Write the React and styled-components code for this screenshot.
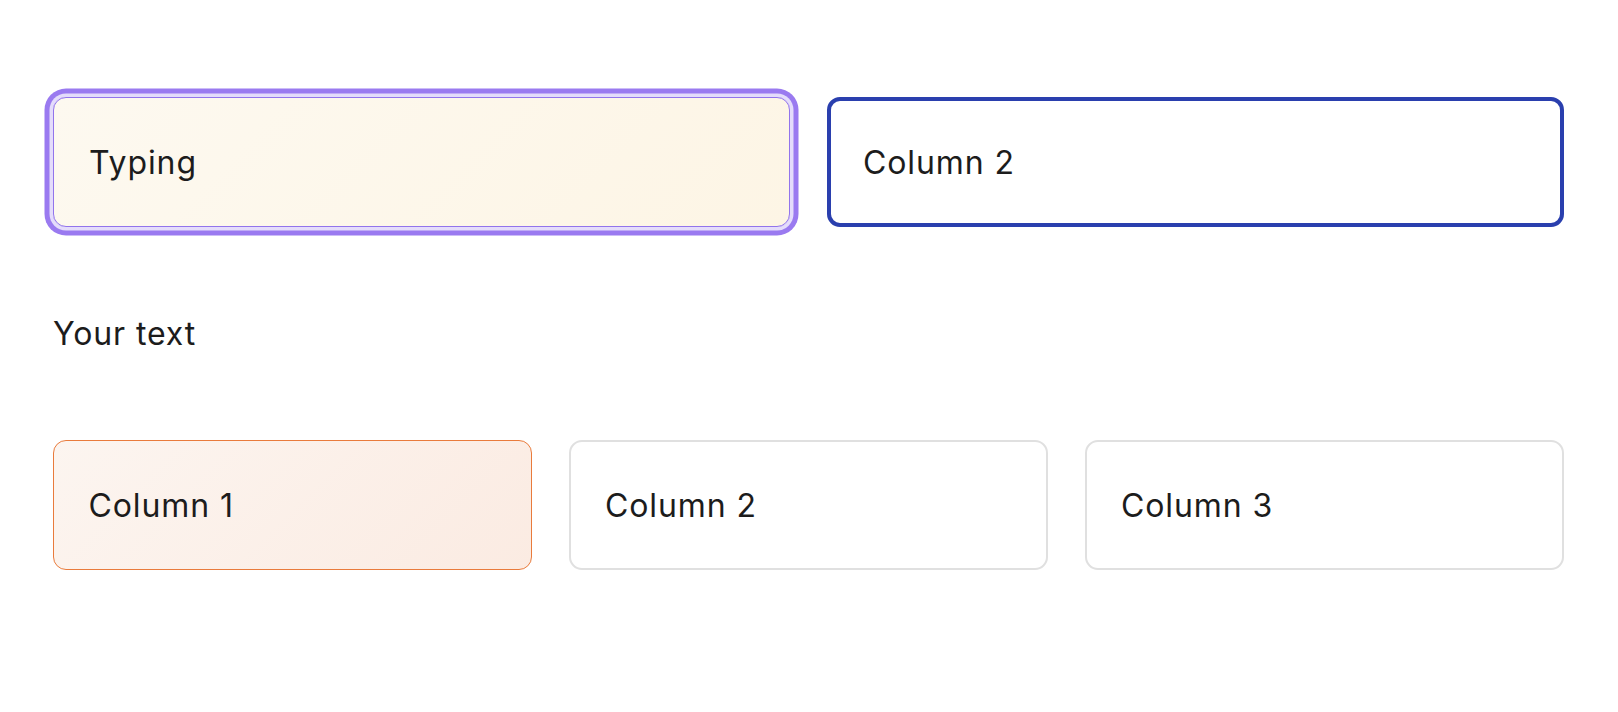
import React from 'react'
import styled, { createGlobalStyle, css } from 'styled-components'

const GlobalStyle = createGlobalStyle`
    html, body {
        margin: 0;
        padding: 0;
        background: #ffffff;
    }
    body {
        font-family: Inter, "Noto Sans", "Liberation Sans", sans-serif;
        color: #1c1c1c;
    }
`

const Page = styled.div`
    display: flex;
    flex-direction: column;
    gap: 87px;
    padding: 97px 54px 0 53px;
`

const Row = styled.div`
    display: grid;
    grid-template-columns: repeat(${props => props.$cols}, 1fr);
    gap: 37px;
`

// border + horizontal padding always add up to 36px so the text lines up
const variants = {
    focused: css`
        border: 1px solid #9274ec;
        padding: 0 35px;
        background: linear-gradient(135deg, #fdf9f0 0%, #fdf5e5 100%);
        box-shadow: 0 0 0 3.5px #e4dcfb, 0 0 0 8.5px #9a7af0;
    `,
    active: css`
        border: 4px solid #2a3fae;
        padding: 0 32px;
        background: #ffffff;
    `,
    selected: css`
        border: 1.5px solid #e97b3c;
        padding: 0 34.5px;
        background: linear-gradient(135deg, #fcf5f0 0%, #fbebe2 100%);
    `,
    plain: css`
        border: 2px solid #e0e0e0;
        padding: 0 34px;
        background: #ffffff;
    `,
}

const Cell = styled.div`
    box-sizing: border-box;
    height: 130px;
    border-radius: 13px;
    display: flex;
    align-items: center;
    font-size: 32px;
    line-height: 39px;
    letter-spacing: 0.9px;
    ${props => variants[props.$variant]}
`

const Label = styled.p`
    margin: 0;
    font-size: 32px;
    line-height: 39px;
    letter-spacing: 0.9px;
`

export default function App() {
    return (
        <>
            <GlobalStyle />
            <Page>
                <Row $cols={2}>
                    <Cell $variant="focused">Typing</Cell>
                    <Cell $variant="active">Column 2</Cell>
                </Row>
                <Label>Your text</Label>
                <Row $cols={3}>
                    <Cell $variant="selected">Column 1</Cell>
                    <Cell $variant="plain">Column 2</Cell>
                    <Cell $variant="plain">Column 3</Cell>
                </Row>
            </Page>
        </>
    )
}
